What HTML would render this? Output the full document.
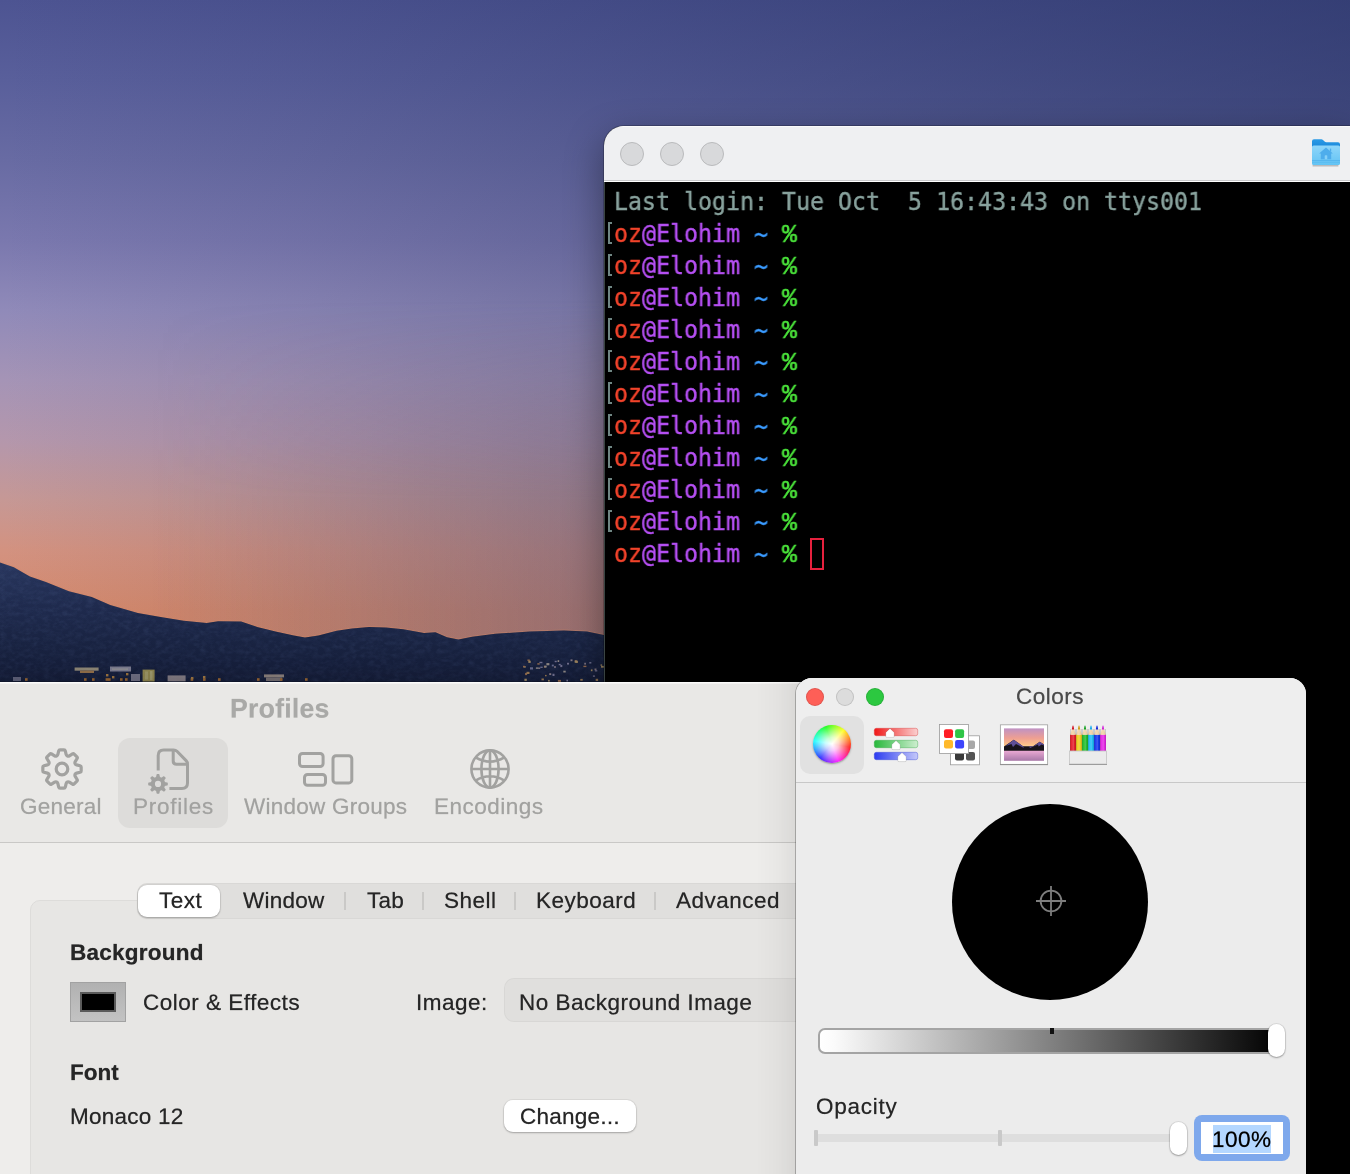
<!DOCTYPE html>
<html lang="en">
<head>
<meta charset="utf-8">
<title>Terminal Preferences - Profiles</title>
<style>
*{box-sizing:border-box;margin:0;padding:0}
html,body{width:1350px;height:1174px;overflow:hidden;background:#000}
#screen{position:absolute;left:0;top:0;width:1350px;height:1174px;overflow:hidden;background:#000;contain:paint}
body{position:relative;font-family:"Liberation Sans",sans-serif;color:#262626;-webkit-font-smoothing:antialiased}
.abs{position:absolute}
.t{position:absolute;white-space:nowrap;line-height:1;transform-origin:0 0;transform:scale(.5);will-change:transform;-webkit-text-stroke:.5px}

/* ---------- wallpaper ---------- */
#wall{position:absolute;left:0;top:0;width:1350px;height:690px;overflow:hidden;
 background:linear-gradient(180deg,#4d5492 0px,#595f9b 80px,#686ba3 160px,#7a78ae 240px,#908ab9 310px,#a594b6 380px,#b497ac 440px,#c69895 500px,#d39280 550px,#d68a6c 610px,#d68866 690px)}
#wall .dark{position:absolute;left:0;top:0;width:1350px;height:690px;
 background:linear-gradient(90deg,rgba(32,44,92,0) 0px,rgba(32,44,92,.10) 300px,rgba(32,44,92,.24) 620px,rgba(32,44,92,.40) 1000px,rgba(32,44,92,.54) 1350px)}
#wall .mute{position:absolute;left:0;top:300px;width:604px;height:390px;background:linear-gradient(90deg,rgba(112,100,128,0) 150px,rgba(112,100,128,.34) 604px);-webkit-mask-image:linear-gradient(180deg,transparent 0,#000 200px);mask-image:linear-gradient(180deg,transparent 0,#000 200px)}
#wall svg{position:absolute;left:0;top:540px}

/* ---------- terminal window ---------- */
#term{position:absolute;left:604px;top:126px;width:746px;height:1048px;border-radius:20px 0 0 0;background:#000;
 box-shadow:0 0 0 1px rgba(0,0,0,.22),0 14px 36px 2px rgba(0,0,0,.36);overflow:hidden}
#term .bar{position:absolute;left:0;top:0;width:100%;height:56px;background:#eff0f2;border-top:1px solid #fafafa;border-bottom:1px solid #fff}
#term .bar:after{content:"";position:absolute;left:0;right:0;bottom:0;height:1px;background:#c9c9cb}
.tl{position:absolute;width:24px;height:24px;border-radius:50%;background:#d8d9db;border:1px solid #b9babc}
#termtxt{position:absolute;left:0;top:0;font-family:"DejaVu Sans Mono","Liberation Mono",monospace;font-size:25px;line-height:32px;-webkit-text-stroke:.4px;white-space:pre;color:#88a29d}
.ln{position:absolute;left:10px;height:32px;white-space:pre;transform-origin:0 0;transform:scaleX(.9302);will-change:transform}
.mk{position:absolute;left:4px;width:4px;height:22px;border:2px solid #6f8683;border-right:0}
.cur{position:absolute;left:206px;top:412px;width:14px;height:32px;border:2px solid #e6213e}
.r{color:#f2432b}.p{color:#b54ff2}.b{color:#3b9bff;position:relative;top:1px}.g{color:#4be53b;font-family:"Liberation Mono",monospace;font-size:26.5px;letter-spacing:-.85px;-webkit-text-stroke:.55px}

/* ---------- preferences window ---------- */
#prefs{position:absolute;left:-20px;top:682px;width:836px;height:492px;background:#eeedeb;box-shadow:0 0 0 1px rgba(0,0,0,.18),0 10px 30px rgba(0,0,0,.3);overflow:hidden}
#prefs .tb{position:absolute;left:0;top:0;width:100%;height:161px;background:#e9e8e6;border-top:1px solid #fcfcfb;border-bottom:1px solid #c9c8c6;box-shadow:inset 0 1px 0 rgba(255,255,255,.45)}
#prefs .in{position:absolute;left:20px;top:0;width:816px;height:520px}
.g1{color:#a3a3a1}
.sel{position:absolute;left:118px;top:56px;width:110px;height:90px;border-radius:12px;background:#dddcda}
.box{position:absolute;left:30px;top:218px;width:900px;height:400px;border-radius:10px;background:#e7e6e4;border:1px solid #dddcda}
.seg{position:absolute;left:137px;top:201px;width:800px;height:36px;border-radius:10px;background:#e0dfdd;box-shadow:inset 0 0 0 1px rgba(0,0,0,.03)}
.segsel{position:absolute;left:138px;top:203px;width:82px;height:32px;border-radius:9px;background:#fff;box-shadow:0 0 0 1px rgba(0,0,0,.05),0 1px 2px rgba(0,0,0,.25)}
.dv{position:absolute;top:210px;width:2px;height:18px;background:#cac9c7}
.well{position:absolute;left:70px;top:300px;width:56px;height:40px;background:linear-gradient(#b1b1b1,#c3c3c3);border:1px solid #a2a2a2}
.well i{position:absolute;left:9px;top:9px;width:36px;height:20px;background:#000;border:2px solid #5a5a5a}
.pop{position:absolute;left:504px;top:296px;width:400px;height:44px;border-radius:10px;background:#e0dfdd;box-shadow:inset 0 0 0 1px rgba(0,0,0,.035)}
.btn{position:absolute;left:504px;top:418px;width:132px;height:32px;border-radius:9px;background:#fff;box-shadow:0 0 0 1px rgba(0,0,0,.05),0 1px 2px rgba(0,0,0,.25)}
.shade{position:absolute;left:756px;top:0;width:44px;height:520px;background:linear-gradient(90deg,rgba(0,0,0,0),rgba(0,0,0,.022) 50%,rgba(0,0,0,.075))}

/* ---------- colors window ---------- */
#colors{position:absolute;left:796px;top:678px;width:510px;height:496px;border-radius:16px 16px 0 0;background:#ececec;box-shadow:0 0 0 1px rgba(0,0,0,.25);overflow:hidden}
#colors .hd{position:absolute;left:0;top:0;width:100%;height:105px;background:#eeeeee;border-bottom:1px solid #c8c8c8}
.cl{position:absolute;top:10px;width:18px;height:18px;border-radius:50%}
.csel{position:absolute;left:4px;top:38px;width:64px;height:58px;border-radius:10px;background:#e1e1e1}
.wheel{position:absolute;left:17px;top:47px;width:38px;height:38px;border-radius:50%;
 background:radial-gradient(circle,#fff 0,rgba(255,255,255,.75) 25%,rgba(255,255,255,0) 70%),conic-gradient(from 100deg,#ff2020,#ff20ff,#3030ff,#20ffff,#20ff20,#ffff20,#ff2020);box-shadow:0 1px 2px rgba(0,0,0,.35)}
.disc{position:absolute;left:156px;top:126px;width:196px;height:196px;border-radius:50%;background:#000}
.bri{position:absolute;left:22px;top:350px;width:464px;height:26px;border-radius:7px;border:2px solid #a4a4a4;background:linear-gradient(90deg,#fff 0,#fbfbfb 3%,#000 100%)}
.knob{position:absolute;width:16.5px;height:33px;border-radius:9px;background:#fff;box-shadow:0 0 0 1px rgba(0,0,0,.08),0 1px 2px rgba(0,0,0,.3)}
.trk{position:absolute;left:19px;top:456px;width:360px;height:8px;background:#dedede}
.tick{position:absolute;top:452px;width:4px;height:16px;background:#c9c9c9;border-radius:1px}
.fld{position:absolute;left:398px;top:437px;width:96px;height:46px;border-radius:8px;background:#7ea8ec}
.fld b{position:absolute;left:7px;top:7px;width:82px;height:32px;background:#fff}
.fld u{position:absolute;left:19px;top:10px;width:58px;height:28px;background:#b4d7ff}
</style>
</head>
<body>
<div id="screen">

<!-- WALLPAPER -->
<div id="wall">
 <div class="dark"></div><div class="mute"></div>
 <svg width="1350" height="150" viewBox="0 540 1350 150">
  <defs><linearGradient id="mg" x1="0" y1="0" x2="0" y2="1"><stop offset="0" stop-color="#29375f"/><stop offset=".35" stop-color="#202c50"/><stop offset=".7" stop-color="#1a2544"/><stop offset="1" stop-color="#161e3a"/></linearGradient>
  <filter id="nz" x="0" y="0" width="100%" height="100%" color-interpolation-filters="sRGB"><feTurbulence type="fractalNoise" baseFrequency=".16 .24" numOctaves="3" seed="7" result="n"/><feColorMatrix in="n" type="matrix" values="0 0 0 0 .3  0 0 0 0 .37  0 0 0 0 .55  .28 .28 .28 0 -.36" result="c"/><feComposite in="c" in2="SourceGraphic" operator="in" result="t"/><feMerge><feMergeNode in="SourceGraphic"/><feMergeNode in="t"/></feMerge></filter>
  <linearGradient id="md" x1="0" y1="0" x2="0" y2="1"><stop offset="0" stop-color="#10162e" stop-opacity="0"/><stop offset=".45" stop-color="#10162e" stop-opacity=".1"/><stop offset="1" stop-color="#10162e" stop-opacity=".38"/></linearGradient>
  <clipPath id="mc"><path d="M0.0 562.6 L13.8 567.2 L29.9 576.4 L45.9 582.1 L68.9 591.3 L91.8 597.1 L110.2 605.1 L137.8 613.1 L160.7 617.0 L183.7 620.7 L206.7 623.0 L218.1 621.2 L241.1 621.6 L257.2 626.9 L275.5 631.5 L293.9 635.4 L305.0 637.4 L318.4 635.4 L336.7 630.8 L352.0 628.4 L368.9 626.9 L386.0 627.6 L403.3 629.2 L424.0 633.1 L435.5 632.2 L447.0 637.3 L458.4 639.6 L472.2 636.8 L495.2 633.8 L529.6 631.5 L564.0 630.4 L587.0 631.5 L604.0 635.0 L604 690 L0 690 Z"/></clipPath></defs>
  <path d="M0.0 562.6 L13.8 567.2 L29.9 576.4 L45.9 582.1 L68.9 591.3 L91.8 597.1 L110.2 605.1 L137.8 613.1 L160.7 617.0 L183.7 620.7 L206.7 623.0 L218.1 621.2 L241.1 621.6 L257.2 626.9 L275.5 631.5 L293.9 635.4 L305.0 637.4 L318.4 635.4 L336.7 630.8 L352.0 628.4 L368.9 626.9 L386.0 627.6 L403.3 629.2 L424.0 633.1 L435.5 632.2 L447.0 637.3 L458.4 639.6 L472.2 636.8 L495.2 633.8 L529.6 631.5 L564.0 630.4 L587.0 631.5 L604.0 635.0 L604 690 L0 690 Z" fill="none" stroke="#d98a62" stroke-opacity=".35" stroke-width="2"/>
  <path fill="url(#mg)" filter="url(#nz)" d="M0.0 562.6 L13.8 567.2 L29.9 576.4 L45.9 582.1 L68.9 591.3 L91.8 597.1 L110.2 605.1 L137.8 613.1 L160.7 617.0 L183.7 620.7 L206.7 623.0 L218.1 621.2 L241.1 621.6 L257.2 626.9 L275.5 631.5 L293.9 635.4 L305.0 637.4 L318.4 635.4 L336.7 630.8 L352.0 628.4 L368.9 626.9 L386.0 627.6 L403.3 629.2 L424.0 633.1 L435.5 632.2 L447.0 637.3 L458.4 639.6 L472.2 636.8 L495.2 633.8 L529.6 631.5 L564.0 630.4 L587.0 631.5 L604.0 635.0 L604 690 L0 690 Z"/>
  <rect x="0" y="560" width="604" height="130" clip-path="url(#mc)" fill="url(#md)"/>
  <g clip-path="url(#mc)" opacity=".6"><rect x="142.6" y="669.6" width="12.0" height="12.0" fill="#d9c55a"/><rect x="145.0" y="671.5" width="3.0" height="8.0" fill="#f0e080"/><rect x="150.0" y="671.0" width="2.5" height="9.0" fill="#f2e48a"/><rect x="74.6" y="667.5" width="24.0" height="3.2" fill="#d9c79a"/><rect x="80.0" y="670.6" width="14.0" height="2.4" fill="#e0a050"/><rect x="110.0" y="666.5" width="21.0" height="5.0" fill="#b9b4c2"/><rect x="112.0" y="668.5" width="16.0" height="1.2" fill="#e4dccc"/><rect x="167.6" y="675.4" width="18.0" height="6.0" fill="#c4b4ae"/><rect x="131.0" y="674.0" width="9.0" height="7.0" fill="#a8a2b0"/><rect x="264.0" y="674.4" width="20.0" height="3.0" fill="#d2bca4"/><rect x="266.0" y="677.4" width="16.0" height="3.6" fill="#b0a094"/><rect x="13.0" y="677.0" width="8.0" height="4.0" fill="#8c8aa0"/><rect x="25.0" y="678.2" width="2.6" height="2.6" fill="#e8902c"/><rect x="84.0" y="678.2" width="2.6" height="2.6" fill="#e8902c"/><rect x="92.0" y="678.2" width="2.6" height="2.6" fill="#e8902c"/><rect x="105.6" y="678.2" width="2.6" height="2.6" fill="#e8902c"/><rect x="108.0" y="678.2" width="2.6" height="2.6" fill="#e8902c"/><rect x="120.0" y="678.2" width="2.6" height="2.6" fill="#e8902c"/><rect x="125.0" y="678.2" width="2.6" height="2.6" fill="#e8902c"/><rect x="190.6" y="678.2" width="2.6" height="2.6" fill="#e8902c"/><rect x="203.0" y="678.2" width="2.6" height="2.6" fill="#e8902c"/><rect x="218.0" y="678.2" width="2.6" height="2.6" fill="#e8902c"/><rect x="257.0" y="678.2" width="2.6" height="2.6" fill="#e8902c"/><rect x="280.0" y="678.2" width="2.6" height="2.6" fill="#e8902c"/><rect x="305.0" y="678.2" width="2.6" height="2.6" fill="#e8902c"/><rect x="106.0" y="674.0" width="2.4" height="2.4" fill="#f0a840"/><rect x="126.0" y="673.0" width="2.4" height="2.4" fill="#f0a840"/><rect x="112.0" y="676.0" width="2.4" height="2.4" fill="#f0a840"/><rect x="191.0" y="677.0" width="2.4" height="2.4" fill="#f0a840"/><rect x="203.0" y="676.0" width="2.4" height="2.4" fill="#f0a840"/><rect x="539.4" y="661.8" width="3.0" height="1.4" fill="#a8a0c0"/><rect x="527.4" y="659.5" width="2.4" height="1.4" fill="#e09858"/><rect x="538.2" y="667.5" width="2.0" height="1.4" fill="#c8b0b0"/><rect x="541.5" y="678.5" width="2.4" height="1.8" fill="#e8b060"/><rect x="535.9" y="667.4" width="2.4" height="1.4" fill="#d8c8b0"/><rect x="589.3" y="662.1" width="2.0" height="1.4" fill="#a8a0c0"/><rect x="540.3" y="666.6" width="2.4" height="1.4" fill="#9a9ac0"/><rect x="594.5" y="668.5" width="2.0" height="1.8" fill="#c8b0b0"/><rect x="554.7" y="660.8" width="2.0" height="1.4" fill="#a8a0c0"/><rect x="545.0" y="674.9" width="1.6" height="1.4" fill="#e8b060"/><rect x="557.9" y="679.9" width="3.0" height="2.2" fill="#e09858"/><rect x="548.1" y="679.9" width="1.6" height="1.8" fill="#f0c878"/><rect x="594.9" y="670.1" width="2.4" height="1.4" fill="#a8a0c0"/><rect x="549.2" y="673.2" width="2.0" height="1.8" fill="#c8b0b0"/><rect x="528.3" y="660.7" width="2.4" height="2.2" fill="#f0c878"/><rect x="570.5" y="659.4" width="2.0" height="1.8" fill="#c8b0b0"/><rect x="557.6" y="660.2" width="1.6" height="1.8" fill="#d8c8b0"/><rect x="580.3" y="678.9" width="2.4" height="1.8" fill="#e8b060"/><rect x="546.4" y="663.1" width="3.0" height="2.2" fill="#d8c8b0"/><rect x="575.8" y="661.1" width="2.0" height="1.8" fill="#e09858"/><rect x="543.9" y="665.8" width="2.0" height="1.8" fill="#e09858"/><rect x="567.0" y="662.8" width="2.0" height="1.8" fill="#a8a0c0"/><rect x="584.3" y="662.8" width="1.6" height="1.8" fill="#c8b0b0"/><rect x="600.5" y="664.4" width="1.6" height="1.4" fill="#f0c878"/><rect x="525.1" y="672.9" width="2.0" height="2.2" fill="#e09858"/><rect x="523.4" y="666.2" width="2.4" height="1.4" fill="#f0c878"/><rect x="530.0" y="667.3" width="3.0" height="2.2" fill="#9a9ac0"/><rect x="601.0" y="665.9" width="3.0" height="1.8" fill="#f0c878"/><rect x="560.3" y="664.9" width="2.0" height="2.2" fill="#a8a0c0"/><rect x="592.9" y="675.4" width="2.0" height="1.4" fill="#a8a0c0"/><rect x="523.0" y="665.8" width="2.0" height="1.4" fill="#e09858"/><rect x="554.2" y="666.1" width="1.6" height="1.8" fill="#c8b0b0"/><rect x="566.4" y="679.7" width="1.6" height="1.8" fill="#a8a0c0"/><rect x="551.8" y="664.6" width="2.0" height="1.8" fill="#9a9ac0"/><rect x="544.3" y="665.7" width="2.4" height="1.8" fill="#d8c8b0"/><rect x="563.3" y="670.7" width="2.4" height="1.8" fill="#d8c8b0"/><rect x="595.7" y="678.8" width="2.4" height="2.2" fill="#e8b060"/><rect x="574.8" y="660.2" width="2.0" height="1.8" fill="#e09858"/><rect x="574.7" y="660.6" width="3.0" height="2.2" fill="#f0c878"/><rect x="558.7" y="663.9" width="2.0" height="1.4" fill="#a8a0c0"/><rect x="537.3" y="663.2" width="2.4" height="1.4" fill="#e09858"/><rect x="552.5" y="673.8" width="2.0" height="2.2" fill="#a8a0c0"/><rect x="524.4" y="678.7" width="2.4" height="2.2" fill="#f0c878"/><rect x="583.4" y="665.7" width="3.0" height="1.4" fill="#e09858"/><rect x="526.5" y="671.8" width="3.0" height="2.2" fill="#e8b060"/><rect x="590.9" y="669.4" width="1.6" height="1.8" fill="#f0c878"/></g>
 </svg>
</div>

<!-- TERMINAL -->
<div id="term">
 <div class="bar">
  <div class="tl" style="left:16px;top:15px"></div>
  <div class="tl" style="left:56px;top:15px"></div>
  <div class="tl" style="left:96px;top:15px"></div>
 </div>
 <i class="abs" style="left:0;top:56px;width:1px;height:1000px;background:#3a4442"></i>
 <div id="termtxt">
  <div class="ln" style="top:60px">Last login: Tue Oct  5 16:43:43 on ttys001</div>
  <i class="mk" style="top:96px"></i>
  <div class="ln" style="top:92px"><span class="r">oz</span><span class="p">@Elohim</span> <span class="b">~</span> <span class="g">%</span> </div>
  <i class="mk" style="top:128px"></i>
  <div class="ln" style="top:124px"><span class="r">oz</span><span class="p">@Elohim</span> <span class="b">~</span> <span class="g">%</span> </div>
  <i class="mk" style="top:160px"></i>
  <div class="ln" style="top:156px"><span class="r">oz</span><span class="p">@Elohim</span> <span class="b">~</span> <span class="g">%</span> </div>
  <i class="mk" style="top:192px"></i>
  <div class="ln" style="top:188px"><span class="r">oz</span><span class="p">@Elohim</span> <span class="b">~</span> <span class="g">%</span> </div>
  <i class="mk" style="top:224px"></i>
  <div class="ln" style="top:220px"><span class="r">oz</span><span class="p">@Elohim</span> <span class="b">~</span> <span class="g">%</span> </div>
  <i class="mk" style="top:256px"></i>
  <div class="ln" style="top:252px"><span class="r">oz</span><span class="p">@Elohim</span> <span class="b">~</span> <span class="g">%</span> </div>
  <i class="mk" style="top:288px"></i>
  <div class="ln" style="top:284px"><span class="r">oz</span><span class="p">@Elohim</span> <span class="b">~</span> <span class="g">%</span> </div>
  <i class="mk" style="top:320px"></i>
  <div class="ln" style="top:316px"><span class="r">oz</span><span class="p">@Elohim</span> <span class="b">~</span> <span class="g">%</span> </div>
  <i class="mk" style="top:352px"></i>
  <div class="ln" style="top:348px"><span class="r">oz</span><span class="p">@Elohim</span> <span class="b">~</span> <span class="g">%</span> </div>
  <i class="mk" style="top:384px"></i>
  <div class="ln" style="top:380px"><span class="r">oz</span><span class="p">@Elohim</span> <span class="b">~</span> <span class="g">%</span> </div>
  <div class="ln" style="top:412px"><span class="r">oz</span><span class="p">@Elohim</span> <span class="b">~</span> <span class="g">%</span> </div>
  <i class="cur"></i>
 </div>
 <svg class="abs" style="left:707px;top:12px" width="30" height="30" viewBox="0 0 30 30">
  <defs><linearGradient id="f1" x1="0" y1="0" x2="0" y2="1"><stop offset="0" stop-color="#2b9be6"/><stop offset="1" stop-color="#1a86da"/></linearGradient>
  <linearGradient id="f2" x1="0" y1="0" x2="0" y2="1"><stop offset="0" stop-color="#8fd6fa"/><stop offset="1" stop-color="#62c3f4"/></linearGradient></defs>
  <path d="M1.6 27.6h25.8" stroke="rgba(0,0,0,.22)" stroke-width="1.6" fill="none"/>
  <path d="M1 3.2Q1 1.2 3 1.2H10.3Q11.3 1.2 12 1.9L13.6 3.6Q14.3 4.3 15.3 4.3H27Q29 4.3 29 6.3V10H1Z" fill="url(#f1)"/>
  <rect x="1" y="7.4" width="28" height="19.6" rx="1.6" fill="url(#f2)"/>
  <rect x="1" y="22" width="28" height="1.2" fill="#55b6ee"/><rect x="1" y="24.2" width="28" height=".8" fill="#5bbcf1"/>
  <path d="M15 9.4L21.9 15.6H20.2V21.2H9.8V15.6H8.1Z" fill="#4eadec"/><rect x="18.9" y="10.6" width="1.3" height="3" fill="#4eadec"/>
  <rect x="13.7" y="17.2" width="2.6" height="4" rx=".8" fill="#86d0f8"/>
 </svg>
</div>

<!-- PREFERENCES -->
<div id="prefs"><div class="tb"></div><div class="in" id="pin">
  <span class="t" style="left:230px;top:13px;font-size:53.2px;letter-spacing:0.5px;color:#a9a9a7;font-weight:700;">Profiles</span>
  <div class="sel"></div>
  <svg class="abs" style="left:41px;top:66px" width="42" height="42" viewBox="0 0 42 42" fill="none" stroke="#a2a2a0" stroke-width="3.2" stroke-linejoin="round"><path d="M15.60 7.92Q16.61 7.49 16.87 6.43L17.71 2.91Q17.97 1.84 19.07 1.84L22.93 1.84Q24.03 1.84 24.29 2.91L25.13 6.43Q25.39 7.49 26.40 7.92L26.43 7.93Q27.45 8.35 28.38 7.77L31.47 5.88Q32.40 5.31 33.18 6.08L35.92 8.82Q36.69 9.60 36.12 10.53L34.23 13.62Q33.65 14.55 34.07 15.57L34.08 15.60Q34.51 16.61 35.57 16.87L39.09 17.71Q40.16 17.97 40.16 19.07L40.16 22.93Q40.16 24.03 39.09 24.29L35.57 25.13Q34.51 25.39 34.08 26.40L34.07 26.43Q33.65 27.45 34.23 28.38L36.12 31.47Q36.69 32.40 35.92 33.18L33.18 35.92Q32.40 36.69 31.47 36.12L28.38 34.23Q27.45 33.65 26.43 34.07L26.40 34.08Q25.39 34.51 25.13 35.57L24.29 39.09Q24.03 40.16 22.93 40.16L19.07 40.16Q17.97 40.16 17.71 39.09L16.87 35.57Q16.61 34.51 15.60 34.08L15.57 34.07Q14.55 33.65 13.62 34.23L10.53 36.12Q9.60 36.69 8.82 35.92L6.08 33.18Q5.31 32.40 5.88 31.47L7.77 28.38Q8.35 27.45 7.93 26.43L7.92 26.40Q7.49 25.39 6.43 25.13L2.91 24.29Q1.84 24.03 1.84 22.93L1.84 19.07Q1.84 17.97 2.91 17.71L6.43 16.87Q7.49 16.61 7.92 15.60L7.93 15.57Q8.35 14.55 7.77 13.62L5.88 10.53Q5.31 9.60 6.08 8.82L8.82 6.08Q9.60 5.31 10.53 5.88L13.62 7.77Q14.55 8.35 15.57 7.93Z"/><circle cx="21" cy="21" r="5.8"/></svg>
  <svg class="abs" style="left:146px;top:64px" width="46" height="50" viewBox="146 746 46 50" fill="none" stroke="#a2a2a0" stroke-width="3" stroke-linecap="butt" stroke-linejoin="round">
   <path d="M158.2 770.6V755.4Q158.2 749.9 163.7 749.9H173.6Q175.6 749.9 177 751.3L186.1 760.6Q187.5 762 187.5 764V783Q187.5 788.5 182 788.5H169.4"/>
   <path d="M173.2 750.2V761Q173.2 764.3 176.5 764.3H187.2"/>
   <g transform="translate(148,773.9)" stroke="none" fill="#a2a2a0"><path fill-rule="evenodd" d="M7.60 3.27Q8.15 3.04 8.25 2.45L8.51 0.79Q8.61 0.20 9.21 0.20L10.79 0.20Q11.39 0.20 11.49 0.79L11.75 2.45Q11.85 3.04 12.40 3.27L13.06 3.54Q13.62 3.77 14.10 3.42L15.46 2.44Q15.94 2.08 16.37 2.51L17.49 3.63Q17.92 4.06 17.56 4.54L16.58 5.90Q16.23 6.38 16.46 6.94L16.73 7.60Q16.96 8.15 17.55 8.25L19.21 8.51Q19.80 8.61 19.80 9.21L19.80 10.79Q19.80 11.39 19.21 11.49L17.55 11.75Q16.96 11.85 16.73 12.40L16.46 13.06Q16.23 13.62 16.58 14.10L17.56 15.46Q17.92 15.94 17.49 16.37L16.37 17.49Q15.94 17.92 15.46 17.56L14.10 16.58Q13.62 16.23 13.06 16.46L12.40 16.73Q11.85 16.96 11.75 17.55L11.49 19.21Q11.39 19.80 10.79 19.80L9.21 19.80Q8.61 19.80 8.51 19.21L8.25 17.55Q8.15 16.96 7.60 16.73L6.94 16.46Q6.38 16.23 5.90 16.58L4.54 17.56Q4.06 17.92 3.63 17.49L2.51 16.37Q2.08 15.94 2.44 15.46L3.42 14.10Q3.77 13.62 3.54 13.06L3.27 12.40Q3.04 11.85 2.45 11.75L0.79 11.49Q0.20 11.39 0.20 10.79L0.20 9.21Q0.20 8.61 0.79 8.51L2.45 8.25Q3.04 8.15 3.27 7.60L3.54 6.94Q3.77 6.38 3.42 5.90L2.44 4.54Q2.08 4.06 2.51 3.63L3.63 2.51Q4.06 2.08 4.54 2.44L5.90 3.42Q6.38 3.77 6.94 3.54Z M10 6.9A3.1 3.1 0 1 0 10 13.1A3.1 3.1 0 1 0 10 6.9Z"/></g>
  </svg>
  <svg class="abs" style="left:296px;top:68px" width="60" height="40" viewBox="296 750 60 40" fill="none" stroke="#a2a2a0" stroke-width="3">
   <rect x="299.5" y="753.5" width="23.6" height="13" rx="3"/><rect x="304.5" y="774.5" width="21" height="10.8" rx="3"/><rect x="333" y="755.7" width="18.8" height="27.2" rx="3"/>
  </svg>
  <svg class="abs" style="left:468px;top:65px" width="44" height="44" viewBox="468 747 44 44" fill="none" stroke="#a2a2a0" stroke-width="2.6">
   <circle cx="490" cy="769" r="18.6"/><ellipse cx="490" cy="769" rx="8.6" ry="18.6"/><path d="M490 750.4V787.6M471.4 769H508.6M475.6 757.4Q490 766 504.4 757.4M475.6 780.6Q490 772 504.4 780.6"/>
  </svg>
  <span class="t" style="left:20px;top:113px;font-size:45px;letter-spacing:0.5px;color:#a2a2a0;">General</span><span class="t" style="left:132.5px;top:113px;font-size:45px;letter-spacing:1.5px;color:#a2a2a0;">Profiles</span><span class="t" style="left:244px;top:113px;font-size:45px;letter-spacing:0.5px;color:#a2a2a0;">Window Groups</span><span class="t" style="left:434px;top:113px;font-size:45px;letter-spacing:1px;color:#a2a2a0;">Encodings</span>
  <div class="box"></div>
  <div class="seg"></div><div class="segsel"></div>
  <i class="dv" style="left:344px"></i><i class="dv" style="left:422px"></i><i class="dv" style="left:514px"></i><i class="dv" style="left:654px"></i>
  <span class="t" style="left:158.5px;top:207px;font-size:45px;letter-spacing:1px;color:#262626;">Text</span><span class="t" style="left:243px;top:207px;font-size:45px;letter-spacing:0.5px;color:#262626;">Window</span><span class="t" style="left:367px;top:207px;font-size:45px;letter-spacing:0.5px;color:#262626;">Tab</span><span class="t" style="left:443.5px;top:207px;font-size:45px;letter-spacing:1px;color:#262626;">Shell</span><span class="t" style="left:535.5px;top:207px;font-size:45px;letter-spacing:1px;color:#262626;">Keyboard</span><span class="t" style="left:676px;top:207px;font-size:45px;letter-spacing:1px;color:#262626;">Advanced</span>
  <span class="t" style="left:70px;top:259px;font-size:45px;letter-spacing:0.5px;color:#262626;font-weight:700;">Background</span>
  <div class="well"><i></i></div>
  <span class="t" style="left:143px;top:309px;font-size:45px;letter-spacing:1px;color:#262626;">Color &amp; Effects</span><span class="t" style="left:416px;top:309px;font-size:45px;letter-spacing:1px;color:#262626;">Image:</span>
  <div class="pop"></div>
  <span class="t" style="left:519px;top:309px;font-size:45px;letter-spacing:1px;color:#262626;">No Background Image</span>
  <span class="t" style="left:70px;top:379px;font-size:45px;letter-spacing:0px;color:#262626;font-weight:700;">Font</span><span class="t" style="left:69.5px;top:423px;font-size:45px;letter-spacing:0.5px;color:#262626;">Monaco 12</span>
  <div class="btn"></div>
  <span class="t" style="left:520px;top:423px;font-size:45px;letter-spacing:0.5px;color:#262626;">Change...</span>
  <div class="shade"></div>
 </div></div>

<!-- COLORS -->
<div id="colors"><div class="hd"></div>
 <i class="cl" style="left:10px;background:#fe5f57;box-shadow:inset 0 0 0 1px rgba(0,0,0,.12)"></i>
 <i class="cl" style="left:40px;background:#dcdcdc;box-shadow:inset 0 0 0 1px rgba(0,0,0,.12)"></i>
 <i class="cl" style="left:70px;background:#2cc840;box-shadow:inset 0 0 0 1px rgba(0,0,0,.12)"></i>
 <span class="t" style="left:220px;top:6.5px;font-size:45px;letter-spacing:1px;color:#4b4b4b;">Colors</span>
 <div class="csel"></div><div class="wheel"></div>
 <svg class="abs" style="left:76px;top:46px" width="48" height="40" viewBox="872 724 48 40">
  <defs><linearGradient id="sr"><stop offset="0" stop-color="#f01818"/><stop offset="1" stop-color="#fbd0d0"/></linearGradient><linearGradient id="sg"><stop offset="0" stop-color="#28b83c"/><stop offset="1" stop-color="#cdeecf"/></linearGradient><linearGradient id="sb"><stop offset="0" stop-color="#2c3cf0"/><stop offset="1" stop-color="#c4c8fa"/></linearGradient></defs>
  <rect x="874.3" y="728.3" width="43.4" height="7.4" rx="2" fill="url(#sr)" stroke="#d63a3a" stroke-opacity=".7" stroke-width=".6"/>
  <rect x="874.3" y="740.3" width="43.4" height="7.4" rx="2" fill="url(#sg)" stroke="#3aa848" stroke-opacity=".7" stroke-width=".6"/>
  <rect x="874.3" y="752.3" width="43.4" height="7.4" rx="2" fill="url(#sb)" stroke="#3a48d6" stroke-opacity=".7" stroke-width=".6"/>
  <g fill="#fff" stroke="rgba(0,0,0,.22)" stroke-width=".6" stroke-linejoin="round"><path d="M885.8 736.4V732.4L890 728.4L894.2 732.4V736.4Q894.2 737.4 893.2 737.4H886.8Q885.8 737.4 885.8 736.4Z"/><path d="M891.8 748.6V744.6L896 740.6L900.2 744.6V748.6Q900.2 749.6 899.2 749.6H892.8Q891.8 749.6 891.8 748.6Z"/><path d="M897.8 760.6V756.6L902 752.6L906.2 756.6V760.6Q906.2 761.6 905.2 761.6H898.8Q897.8 761.6 897.8 760.6Z"/></g>
 </svg>
 <svg class="abs" style="left:140px;top:44px" width="48" height="46" viewBox="936 722 48 46">
  <rect x="950.5" y="735.8" width="29" height="29" fill="#fff" stroke="#9a9a9a" stroke-width=".8"/>
  <rect x="966" y="740.5" width="9" height="8.5" rx="2" fill="#a8a8a8"/><rect x="955" y="752" width="9" height="8.5" rx="2" fill="#3a3a3a"/><rect x="966" y="752" width="9" height="8.5" rx="2" fill="#555"/>
  <rect x="939.6" y="724.6" width="29" height="29" fill="#fff" stroke="#9a9a9a" stroke-width=".8"/>
  <rect x="944" y="729.3" width="9" height="8.6" rx="2" fill="#ff1d25"/><rect x="955.1" y="729.3" width="9" height="8.6" rx="2" fill="#2fc546"/><rect x="944" y="740" width="9" height="8.6" rx="2" fill="#ffb92a"/><rect x="955.1" y="740" width="9" height="8.6" rx="2" fill="#3d45fb"/>
 </svg>
 <svg class="abs" style="left:202px;top:44px" width="52" height="46" viewBox="998 722 52 46">
  <defs><linearGradient id="ig" x1="0" y1="0" x2="0" y2="1"><stop offset="0" stop-color="#bf92c4"/><stop offset=".3" stop-color="#ee9f92"/><stop offset=".5" stop-color="#fbc08a"/><stop offset=".6" stop-color="#fde2a4"/><stop offset=".7" stop-color="#e8a8d2"/><stop offset="1" stop-color="#a878a8"/></linearGradient></defs>
  <rect x="1000.4" y="724.8" width="47.2" height="39.6" fill="#fff" stroke="#a8a8a8" stroke-width=".9"/><rect x="1000" y="764.2" width="48" height=".9" fill="#8a8a8a"/>
  <rect x="1004" y="728.4" width="40" height="32.4" fill="url(#ig)"/>
  <path d="M1004 746.4L1013.8 739.8L1023 746.2H1033L1039.8 741.8L1044 744.6V750.8H1004Z" fill="#17131c"/><path d="M1013.8 739.8L1005.5 746L1011.5 744L1013 747L1016 744L1024 748L1023 746.2Z" fill="#5e4e98"/><path d="M1039.8 741.8L1033.5 746.2L1029 746.6L1030 748L1038 744.6L1038.6 746.6L1041.6 744.6L1044 745.6V744.6Z" fill="#5e4e98"/>
 </svg>
 <svg class="abs" style="left:271px;top:45px" width="42" height="44" viewBox="1067 723 42 44">
  <defs><linearGradient id="pg" x1="0" y1="0" x2="1" y2="0"><stop offset="0" stop-color="#000" stop-opacity=".28"/><stop offset=".3" stop-color="#fff" stop-opacity=".0"/><stop offset=".55" stop-color="#fff" stop-opacity=".22"/><stop offset=".8" stop-color="#000" stop-opacity="0"/><stop offset="1" stop-color="#000" stop-opacity=".25"/></linearGradient>
  <pattern id="pp" x="1070" y="0" width="6" height="50" patternUnits="userSpaceOnUse"><rect width="6" height="50" fill="url(#pg)"/></pattern></defs>
  <rect x="1070" y="734.6" width="6" height="16.6" fill="#e8202c"/><rect x="1076" y="734.6" width="6" height="16.6" fill="#f0d020"/><rect x="1082" y="734.6" width="6" height="16.6" fill="#22c030"/><rect x="1088" y="734.6" width="6" height="16.6" fill="#20c0f8"/><rect x="1094" y="734.6" width="6" height="16.6" fill="#1838f0"/><rect x="1100" y="734.6" width="6" height="16.6" fill="#e828e8"/>
  <g fill="#f3d3a6"><path d="M1070.2 734.8L1071.9 729.2H1074.1L1075.8 734.8Z"/><path d="M1076.2 734.8L1077.9 729.2H1080.1L1081.8 734.8Z"/><path d="M1082.2 734.8L1083.9 729.2H1086.1L1087.8 734.8Z"/><path d="M1088.2 734.8L1089.9 729.2H1092.1L1093.8 734.8Z"/><path d="M1094.2 734.8L1095.9 729.2H1098.1L1099.8 734.8Z"/><path d="M1100.2 734.8L1101.9 729.2H1104.1L1105.8 734.8Z"/></g>
  <rect x="1070" y="729" width="36" height="22.2" fill="url(#pp)"/>
  <path d="M1071.8 729.4L1072.6 725.8Q1073 725.4 1073.4 725.8L1074.2 729.4Z" fill="#d01020"/><path d="M1077.8 729.4L1078.6 725.8Q1079 725.4 1079.4 725.8L1080.2 729.4Z" fill="#d09a10"/><path d="M1083.8 729.4L1084.6 725.8Q1085 725.4 1085.4 725.8L1086.2 729.4Z" fill="#10a020"/><path d="M1089.8 729.4L1090.6 725.8Q1091 725.4 1091.4 725.8L1092.2 729.4Z" fill="#10a8f0"/><path d="M1095.8 729.4L1096.6 725.8Q1097 725.4 1097.4 725.8L1098.2 729.4Z" fill="#1020d8"/><path d="M1101.8 729.4L1102.6 725.8Q1103 725.4 1103.4 725.8L1104.2 729.4Z" fill="#d020d8"/>
  <rect x="1069.6" y="751" width="37" height="13" fill="#ebebeb" stroke="#c4c4c4" stroke-width=".8"/><rect x="1069.2" y="764" width="37.8" height="1" fill="#9c9c9c"/>
 </svg>
 <div class="disc"></div>
 <svg class="abs" style="left:238px;top:206px" width="34" height="34" viewBox="0 0 34 34" fill="none" stroke="#7d7d7d" stroke-width="1.8"><circle cx="17" cy="17" r="10.4"/><path d="M17 2V32M2 17H32"/></svg>
 <div class="bri"></div><i class="abs" style="left:254px;top:350px;width:4px;height:6px;background:#111"></i>
 <i class="knob" style="left:472px;top:346px"></i>
 <span class="t" style="left:19.5px;top:417px;font-size:45px;letter-spacing:1.5px;color:#262626;">Opacity</span>
 <div class="trk"></div><i class="tick" style="left:18px"></i><i class="tick" style="left:202px"></i>
 <i class="knob" style="left:374px;top:444px"></i>
 <div class="fld"><b></b><u></u></div>
 <span class="t" style="left:415.5px;top:450px;font-size:45px;letter-spacing:1px;color:#000;">100%</span>
</div>

</div>
</body>
</html>
